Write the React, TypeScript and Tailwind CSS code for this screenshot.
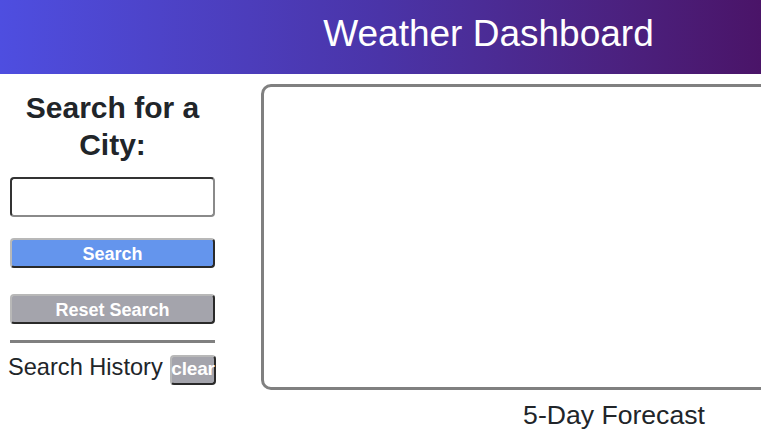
import React from "react";

export default function App() {
  const font = { fontFamily: '"Liberation Sans", Arial, sans-serif' };
  return (
    <div className="w-[761px] h-[439px] overflow-hidden bg-white text-[#212529]" style={font}>
      <header className="h-[74px] w-full bg-gradient-to-r from-[#4e4ee0] via-[#4a34a8] to-[#4a1468] flex items-center justify-center pl-[216px] pb-[7px]">
        <h1 className="text-white text-[37px] leading-none font-normal whitespace-nowrap">Weather Dashboard</h1>
      </header>
      <div className="flex">
        <aside className="w-[225px] shrink-0 px-[10px] flex flex-col">
          <h2 className="mt-[15px] text-center text-[30px] leading-[37px] font-bold text-[#212529]">
            Search for a City:
          </h2>
          <input
            type="text"
            className="mt-[14px] h-[40px] w-[205px] rounded-[4px] border-2 border-t-[#333] border-l-[#333] border-r-[#8a8a8a] border-b-[#8a8a8a] bg-white outline-none"
          />
          <button className="mt-[21px] h-[30px] w-[205px] rounded-[4px] bg-[#6495ed] border-2 border-t-[#b8b8b8] border-l-[#b8b8b8] border-r-[#2a2a2a] border-b-[#2a2a2a] text-white font-bold text-[18px] leading-none pt-[2px]">
            Search
          </button>
          <button className="mt-[26px] h-[30px] w-[205px] rounded-[4px] bg-[#a4a4ac] border-2 border-t-[#b8b8b8] border-l-[#b8b8b8] border-r-[#2a2a2a] border-b-[#2a2a2a] text-white font-bold text-[18px] leading-none pt-[2px]">
            Reset Search
          </button>
          <div className="mt-[16px] h-[3px] w-[205px] bg-[#808080]" />
          <div className="mt-[12px] -ml-[2px] flex items-center w-[208px] justify-between">
            <span className="text-[23.6px] leading-none whitespace-nowrap -mt-[4px]">Search History</span>
            <button className="h-[30px] w-[46px] rounded-[4px] bg-[#a4a4ac] border-2 border-t-[#b8b8b8] border-l-[#b8b8b8] border-r-[#2a2a2a] border-b-[#2a2a2a] text-white font-bold text-[19px] leading-[19px] flex items-center justify-center overflow-visible tracking-[-0.2px] pb-[3px]">
              clear
            </button>
          </div>
        </aside>
        <main className="ml-[36px] w-[706px] shrink-0 flex flex-col">
          <div className="mt-[10px] h-[306px] w-[706px] rounded-[10px] border-[3px] border-[#808080] bg-white" />
          <h3 className="mt-[10px] text-center text-[26.6px] leading-[31px] font-normal text-[#212529]">5-Day Forecast</h3>
        </main>
      </div>
    </div>
  );
}
